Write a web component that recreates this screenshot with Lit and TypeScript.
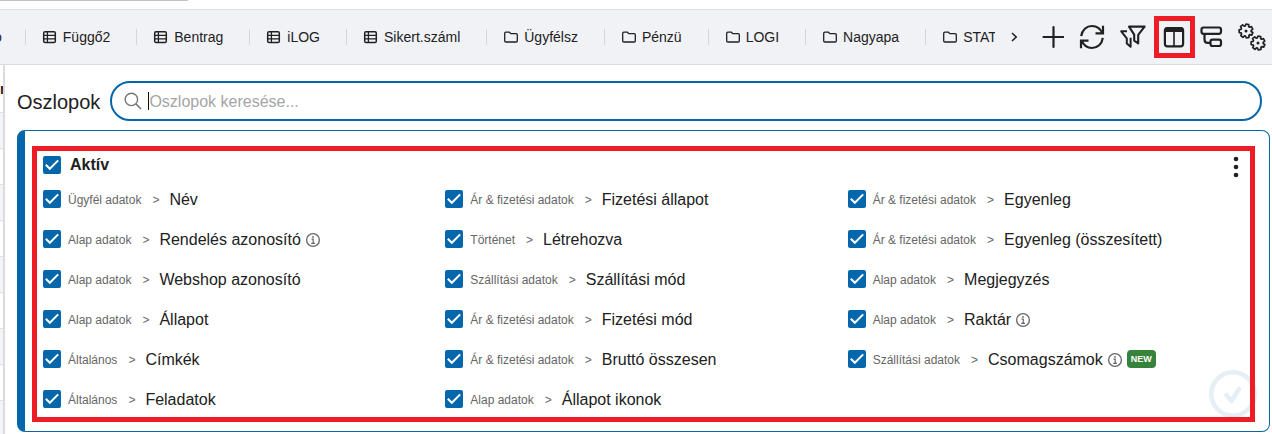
import { LitElement, html, css, svg } from "lit";
import { customElement, property } from "lit/decorators.js";

type Column = { group: string; name: string; info?: boolean; isNew?: boolean };

const TABS = [
  { icon: "table", label: "Függő2" },
  { icon: "table", label: "Bentrag" },
  { icon: "table", label: "iLOG" },
  { icon: "table", label: "Sikert.száml" },
  { icon: "folder", label: "Ügyfélsz" },
  { icon: "folder", label: "Pénzü" },
  { icon: "folder", label: "LOGI" },
  { icon: "folder", label: "Nagyapa" },
  { icon: "folder", label: "STAT" },
];

const COLUMNS: Column[] = [
  { group: "Ügyfél adatok", name: "Név" },
  { group: "Alap adatok", name: "Rendelés azonosító", info: true },
  { group: "Alap adatok", name: "Webshop azonosító" },
  { group: "Alap adatok", name: "Állapot" },
  { group: "Általános", name: "Címkék" },
  { group: "Általános", name: "Feladatok" },
  { group: "Ár & fizetési adatok", name: "Fizetési állapot" },
  { group: "Történet", name: "Létrehozva" },
  { group: "Szállítási adatok", name: "Szállítási mód" },
  { group: "Ár & fizetési adatok", name: "Fizetési mód" },
  { group: "Ár & fizetési adatok", name: "Bruttó összesen" },
  { group: "Alap adatok", name: "Állapot ikonok" },
  { group: "Ár & fizetési adatok", name: "Egyenleg" },
  { group: "Ár & fizetési adatok", name: "Egyenleg (összesített)" },
  { group: "Alap adatok", name: "Megjegyzés" },
  { group: "Alap adatok", name: "Raktár", info: true },
  { group: "Szállítási adatok", name: "Csomagszámok", info: true, isNew: true },
];

const gear = (cx: number, cy: number) => {
  const points: string[] = [];
  const teeth = 7;
  for (let i = 0; i < teeth; i++) {
    const a = (i / teeth) * Math.PI * 2 - Math.PI / 2 + 0.2;
    for (const [r, d] of [[5.2, -0.34], [7, -0.2], [7, 0.2], [5.2, 0.34]]) {
      points.push(`${(cx + r * Math.cos(a + d)).toFixed(2)},${(cy + r * Math.sin(a + d)).toFixed(2)}`);
    }
  }
  return svg`<polygon points=${points.join(" ")} stroke-width="1.7" stroke-linejoin="round"/>
    <circle cx=${cx} cy=${cy} r="1.5" fill="currentColor" stroke="none"/>`;
};

const ICONS: Record<string, { w: number; h: number; body: unknown }> = {
  table: { w: 16, h: 16, body: svg`<rect x="1.7" y="2.7" width="11.6" height="10.9" rx="1.3" stroke-width="1.5"/><path d="M5.4 2.5v11M1.5 6.3h12M1.5 9.9h12" stroke-width="1.3"/>` },
  folder: { w: 16, h: 16, body: svg`<path d="M1.7 4.2c0-.7.4-1.1 1.1-1.1h3.3l1.9 1.6h5.2c.7 0 1.1.4 1.1 1.1v6.1c0 .7-.4 1.1-1.1 1.1H2.8c-.7 0-1.1-.4-1.1-1.1z" stroke-width="1.3" stroke-linejoin="round"/>` },
  chevron: { w: 16, h: 16, body: svg`<path d="M6 4l4.2 4L6 12" stroke-width="1.6"/>` },
  plus: { w: 24, h: 24, body: svg`<path d="M13.500 2v20M3.500 12h20" stroke-width="2.2" stroke-linecap="round"/>` },
  refresh: { w: 26, h: 26, body: svg`<path d="M2.2 12.2C3 6 7.6 2 13 2c5 0 8.600 3 10.300 7.300M24 1.800v7.500h-7.500M23.800 13.800C23 20 18.400 24 13 24c-5 0-8.600-3-10.300-7.300M2 24.200v-7.500h7.500" stroke-width="2.2"/>` },
  filters: { w: 28, h: 26, body: svg`<path d="M11 2.600h15.600l-6.400 8.200v8.600l-4-2.800v-6z" stroke-width="2.100" stroke-linejoin="round"/><path d="M9 7.300H3.200l5.600 7v5.200l3.800 3.300v-9" stroke-width="2" stroke-linejoin="round"/>` },
  columns: { w: 22, h: 22, body: svg`<rect x="1.900" y="2" width="18.200" height="18.400" rx="2.600" stroke-width="2.200"/><path d="M1.500 6V3.800C1.500 2 2.500 1 4.200 1h13.600c1.700 0 2.700 1 2.700 2.800V6z" fill="currentColor" stroke="none"/><path d="M11 6v14" stroke-width="1.600"/>` },
  tree: { w: 24, h: 24, body: svg`<rect x="1.500" y="2.500" width="19.500" height="6.300" rx="2" stroke-width="2.200"/><rect x="10.500" y="14.700" width="10.500" height="6.300" rx="2" stroke-width="2.200"/><path d="M4.500 9v5.500c0 2.200 1.200 3.400 3.400 3.400h2.600" stroke-width="2.200"/>` },
  gears: { w: 32, h: 32, body: svg`${gear(10, 10)}${gear(22, 22)}` },
  search: { w: 18, h: 18, body: svg`<circle cx="7.400" cy="7.400" r="6.200" stroke-width="1.400"/><path d="M11.900 11.900L17 17" stroke-width="1.500"/>` },
  dots: { w: 8, h: 24, body: svg`<g fill="currentColor" stroke="none"><circle cx="4" cy="4" r="2.300"/><circle cx="4" cy="12" r="2.300"/><circle cx="4" cy="20" r="2.300"/></g>` },
  info: { w: 16, h: 16, body: svg`<circle cx="8" cy="8" r="6.400" stroke-width="1.300"/><path d="M6.500 7.200h1.700v4M6.200 11.300h3.800" stroke-width="1.200"/><circle cx="8" cy="4.900" r=".9" fill="currentColor" stroke="none"/>` },
  confirm: { w: 48, h: 48, body: svg`<circle cx="24" cy="24" r="21.700" stroke-width="4.600"/><path d="M17.500 25l5 6 7.500-12" stroke-width="4.600" stroke-linecap="round" stroke-linejoin="round"/>` },
};

const icon = (name: string) => {
  const i = ICONS[name];
  return html`<svg width=${i.w} height=${i.h} viewBox="0 0 ${i.w} ${i.h}" fill="none" stroke="currentColor" aria-hidden="true">${i.body}</svg>`;
};

const shared = css`
  * { box-sizing: border-box; }
  svg { display: block; flex: none; }
  button { display: flex; align-items: center; justify-content: center; border: 0; padding: 0; background: none; color: inherit; font: inherit; cursor: pointer; }
  .check {
    appearance: none; flex: none; width: 18px; height: 18px; margin: 0; border-radius: 2px; border: 2px solid #0567ab;
  }
  .check:checked {
    background: #0567ab url("data:image/svg+xml,%3Csvg xmlns='http://www.w3.org/2000/svg' viewBox='0 0 14 14'%3E%3Cpath d='M.8 6.800l4 4 8.400-8.400' fill='none' stroke='white' stroke-width='2'/%3E%3C/svg%3E") center / 14px 14px no-repeat;
  }
`;

@customElement("tab-toolbar")
export class TabToolbar extends LitElement {
  static styles = [shared, css`
    :host { display: flex; align-items: center; height: 56px; background: #f1f2f6; border-top: 1px solid #dcdcdf; border-bottom: 1px solid #dcdadb; }
    .strip { flex: 1; min-width: 0; overflow: hidden; display: flex; }
    .tab { flex: none; gap: 5px; height: 16px; padding: 0 26px 0 16px; border-left: 1px solid #d5d6da; font-size: 14px; line-height: 16px; white-space: nowrap; }
    .tab.cut { margin-left: -6px; padding: 0 23px 0 0; border: 0; }
    .next { flex: none; width: 37px; height: 32px; }
    .tools { flex: none; display: flex; }
    .tool { position: relative; width: 40px; height: 40px; }
    .mark { position: absolute; inset: -1px -3px -1px 2px; border: 5px solid #ee1c24; }
    .tool.active svg { margin-left: 3px; }
  `];
  render() {
    const tools = [
      ["plus", "Hozzáadás"], ["refresh", "Frissítés"], ["filters", "Szűrők"],
      ["columns", "Oszlopok"], ["tree", "Csoportosítás"], ["gears", "Beállítások"],
    ];
    return html`
      <nav class="strip">
        <button class="tab cut">ó</button>
        ${TABS.map((t) => html`<button class="tab">${icon(t.icon)}${t.label}</button>`)}
      </nav>
      <button class="next" aria-label="Következő">${icon("chevron")}</button>
      <div class="tools">
        ${tools.map(([id, label]) => html`
          <button class="tool ${id === "columns" ? "active" : ""}" aria-label=${label}>
            ${icon(id)}${id === "columns" ? html`<span class="mark"></span>` : ""}
          </button>`)}
      </div>`;
  }
}

@customElement("column-option")
export class ColumnOption extends LitElement {
  @property({ attribute: false }) column!: Column;
  static styles = [shared, css`
    :host { display: flex; align-items: center; height: 40px; }
    .option { display: flex; align-items: center; white-space: nowrap; }
    .group { margin-left: 7px; padding-top: 3px; font-size: 12px; line-height: 17px; color: #666; }
    .arrow { margin: 0 10px 0 11px; }
    .name { padding-top: 2px; font-size: 16px; line-height: 20px; }
    .info { margin-left: 4px; padding-top: 1px; color: #666; }
    .badge { margin-left: 4px; padding: 0 4px; border-radius: 4px; background: #37833b; color: #fff; font-size: 9px; line-height: 18px; font-weight: 700; }
  `];
  render() {
    const c = this.column;
    return html`
      <label class="option">
        <input class="check" type="checkbox" checked />
        <span class="group">${c.group}<span class="arrow">&gt;</span></span>
        <span class="name">${c.name}</span>
      </label>
      ${c.info ? html`<span class="info">${icon("info")}</span>` : ""}
      ${c.isNew ? html`<span class="badge">NEW</span>` : ""}`;
  }
}

@customElement("app-root")
export class AppRoot extends LitElement {
  static styles = [shared, css`
    :host { display: flex; flex-direction: column; min-height: 100vh; background: #fff; color: #212121; font-family: "Liberation Sans", Arial, sans-serif; overflow: hidden; }
    .scroll { height: 9px; }
    .thumb { width: 188px; height: 1px; background: #c1c1c1; border-radius: 0 0 4px 0; }
    .body { flex: 1; display: flex; }
    .behind { flex: none; width: 5px; overflow: hidden; border-right: 2px solid #dedada; }
    .head { display: flex; justify-content: flex-start; height: 48px; padding: 16px 0 0; border-bottom: 1px solid #dcdfe5; font-size: 14px; line-height: 16px; font-weight: 700; }
    .line { height: 36px; border-bottom: 1px solid #dcdfe5; }
    .line:nth-child(even) { background: #f1f4f9; }
    .panel { flex: 1; min-width: 0; padding: 16px 2px 2px 12px; }
    .searchrow { display: flex; align-items: center; gap: 10px; margin: 0 8px 9px 0; }
    .title { padding-top: 2px; font-size: 20px; line-height: 24px; }
    .search { flex: 1; display: flex; align-items: center; height: 40px; padding: 0 16px 0 12px; border: 2px solid #0567ab; border-radius: 20px; color: #757575; }
    .caret { width: 1px; height: 18px; margin-left: 6px; background: #111; }
    .field { flex: 1; min-width: 0; padding: 2px 0 0; border: 0; outline: 0; background: none; color: #212121; font: 16px/20px "Liberation Sans", Arial, sans-serif; }
    .field::placeholder { color: #a5a5a5; opacity: 1; }
    .card { position: relative; padding: 22px 19px 12px 18px; border: 1px solid #0567ab; border-left-width: 8px; border-radius: 8px; }
    .cardhead { display: flex; align-items: center; justify-content: space-between; height: 24px; margin-bottom: 2px; }
    .all { display: flex; align-items: center; gap: 9px; font-size: 16px; line-height: 20px; font-weight: 700; }
    .more { width: 28px; height: 24px; padding-top: 3px; }
    .grid { display: grid; grid-template-columns: repeat(3, minmax(0, 1fr)); grid-template-rows: repeat(6, 40px); grid-auto-flow: column; }
    .confirm { position: absolute; right: 12px; bottom: 13px; color: #e6eff6; }
    .mark { position: absolute; inset: 15px 14px 9px 7px; border: 5px solid #ee1c24; pointer-events: none; }
  `];
  render() {
    return html`
      <div class="scroll"><div class="thumb"></div></div>
      <tab-toolbar></tab-toolbar>
      <div class="body">
        <div class="behind" aria-hidden="true">
          <div class="head">n</div>
          ${Array.from({ length: 9 }, () => html`<div class="line"></div>`)}
        </div>
        <main class="panel">
          <div class="searchrow">
            <label class="title" for="search">Oszlopok</label>
            <div class="search">
              ${icon("search")}<span class="caret"></span>
              <input class="field" id="search" type="text" placeholder="Oszlopok keresése..." />
            </div>
          </div>
          <section class="card">
            <div class="cardhead">
              <label class="all"><input class="check" type="checkbox" checked />Aktív</label>
              <button class="more" aria-label="Továbbiak">${icon("dots")}</button>
            </div>
            <div class="grid">
              ${COLUMNS.map((c) => html`<column-option .column=${c}></column-option>`)}
            </div>
            <button class="confirm" aria-label="Mentés">${icon("confirm")}</button>
            <div class="mark"></div>
          </section>
        </main>
      </div>`;
  }
}
